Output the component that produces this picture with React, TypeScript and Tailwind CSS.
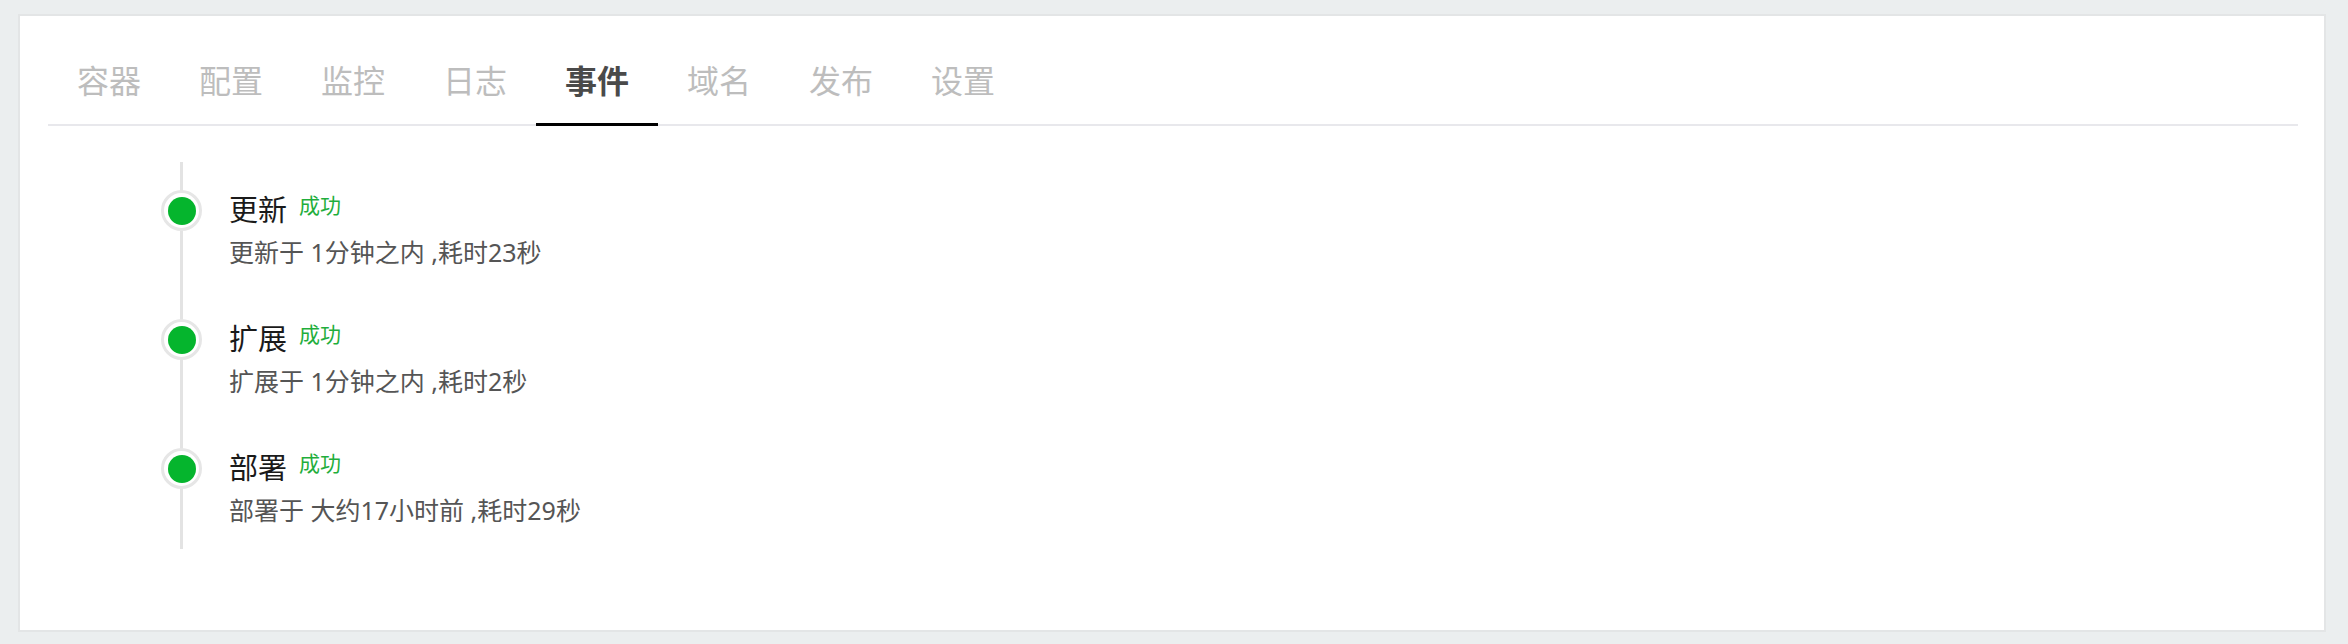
const tabs = ["容器", "配置", "监控", "日志", "事件", "域名", "发布", "设置"];

const events = [
  { title: "更新", status: "成功", desc: "更新于 1分钟之内 ,耗时23秒" },
  { title: "扩展", status: "成功", desc: "扩展于 1分钟之内 ,耗时2秒" },
  { title: "部署", status: "成功", desc: "部署于 大约17小时前 ,耗时29秒" },
];

function Tabs({ active }: { active: string }) {
  return (
    <div className="flex border-b-2 border-[#e8e8ec]">
      {tabs.map((t) => {
        const on = t === active;
        return (
          <div
            key={t}
            className={
              on
                ? "px-[29px] pb-[19px] text-[32px] leading-[46px] font-semibold text-[#4a4a4a] border-b-[3px] border-black -mb-[2px]"
                : "px-[29px] pb-[19px] text-[32px] leading-[46px] text-[#bdbdbd] border-b-[3px] border-transparent -mb-[2px]"
            }
          >
            {t}
          </div>
        );
      })}
    </div>
  );
}

function Timeline() {
  return (
    <div className="relative ml-[113px] mt-[36px] pt-[28px] pb-[17px]">
      <div className="absolute left-[19px] top-0 bottom-0 w-[3px] bg-[#e3e3e3]" />
      {events.map((e, i) => (
        <div
          key={e.title}
          className={i < events.length - 1 ? "relative flex gap-[27px] mb-[45px]" : "relative flex gap-[27px]"}
        >
          <div className="flex h-[41px] w-[41px] shrink-0 items-center justify-center rounded-full border-[3px] border-[#e6e6e6] bg-white">
            <div className="h-[28px] w-[28px] rounded-full bg-[#05b52d]" />
          </div>
          <div>
            <div className="flex items-start gap-[12px]">
              <span className="text-[29px] leading-[40px] text-[#1a1a1a]">{e.title}</span>
              <span className="text-[21px] leading-[30px] text-[#1fae3c]">{e.status}</span>
            </div>
            <div className="text-[25px] leading-[44px] text-[#555555]">{e.desc}</div>
          </div>
        </div>
      ))}
    </div>
  );
}

export default function App() {
  return (
    <div
      className="h-[644px] bg-[#ebeeef] pt-[14px] pl-[18px] pr-[22px]"
      style={{ fontFamily: '"Noto Sans", "Noto Sans CJK SC", sans-serif' }}
    >
      <div className="border-2 border-[#e3e5e6] bg-white pt-[42px] pl-[28px] pr-[26px] pb-[81px]">
        <Tabs active="事件" />
        <Timeline />
      </div>
    </div>
  );
}
